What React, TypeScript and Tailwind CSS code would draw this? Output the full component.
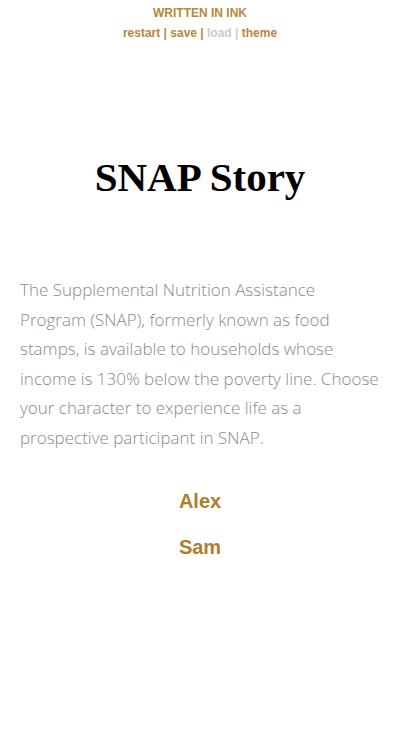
export default function App() {
  return (
    <div className="min-h-[744px] w-full bg-white">
      <div className="flex flex-col items-center pt-[6px] font-['Liberation_Sans',Arial,sans-serif] text-[12px] font-bold leading-[14px]">
        <div className="text-[#b8873a]">WRITTEN IN INK</div>
        <div className="mt-[6px] text-[#b8873a]">
          restart | save | <span className="text-[#cccccc]">load |</span> theme
        </div>
      </div>

      <h1 className="mt-[115px] text-center font-['Liberation_Serif',serif] text-[41px] font-bold leading-[44px] text-black">
        SNAP Story
      </h1>

      <p className="mt-[76px] px-[20px] font-['Open_Sans',sans-serif] text-[17px] font-light leading-[29.5px] text-[#8a8a8a]">
        The Supplemental Nutrition Assistance Program (SNAP), formerly known as food stamps, is available to households whose income is 130% below the poverty line. Choose your character to experience life as a prospective participant in SNAP.
      </p>

      <div className="mt-[37px] flex flex-col items-center gap-[22px] font-['Liberation_Sans',Arial,sans-serif] text-[20px] font-bold leading-[24px] text-[#b07d2f]">
        <div>Alex</div>
        <div>Sam</div>
      </div>
    </div>
  );
}
